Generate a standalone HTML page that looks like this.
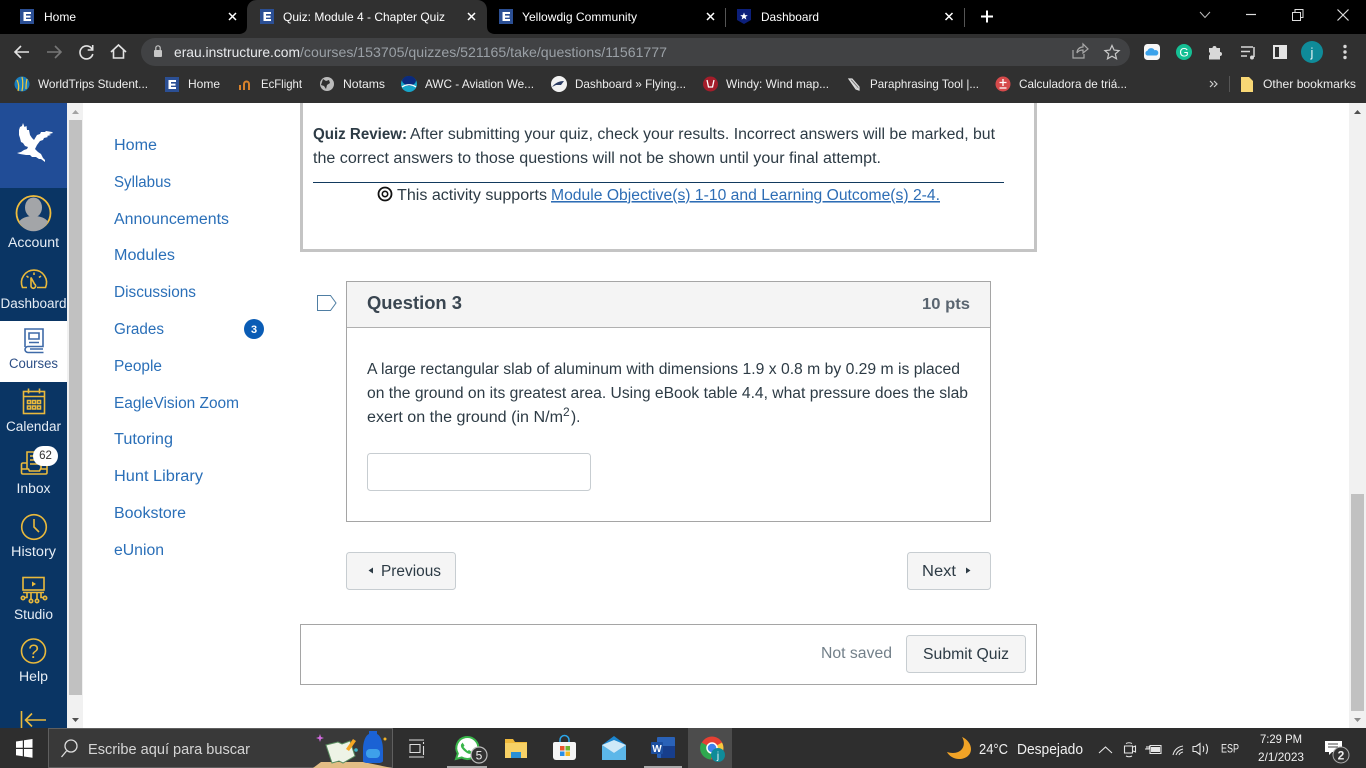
<!DOCTYPE html>
<html lang="en"><head><meta charset="utf-8"><title>Quiz: Module 4 - Chapter Quiz</title>
<style>
html,body{margin:0;padding:0;width:1366px;height:768px;overflow:hidden;background:#fff}
svg{display:block}
text{font-family:"Liberation Sans",sans-serif;white-space:pre}
.t{font-size:12px;fill:#fff}
.b{font-size:12px;fill:#eee}
.m{font-size:15.5px;fill:#2a6fb8}
.s{font-size:13.5px;fill:#e6edf5;text-anchor:middle}
.c{font-size:15.5px;fill:#2d3b45}
.i{fill:none;stroke:#e9b93c;stroke-width:1.6}
</style></head><body>
<svg width="1366" height="768" viewBox="0 0 1366 768" xmlns="http://www.w3.org/2000/svg">
<defs>
<g id="e"><rect width="14" height="15" fill="#2b4f94"/><path d="M3.500 3h7.500v2h-5v1.600h4.500v2H6v1.400h5v2H3.500z" fill="#fff"/></g>
</defs>
<!-- chrome -->
<rect width="1366" height="34" fill="#000"/>
<rect y="34" width="1366" height="69" fill="#303030"/>
<path d="M240 34c5-1 7-3 7-8V10c0-6 4-10 10-10h220c6 0 10 4 10 10v16c0 5 2 7 7 8z" fill="#303030"/>
<!-- tabs -->
<use href="#e" x="20" y="9"/><use href="#e" x="260" y="9"/><use href="#e" x="499" y="9"/>
<path d="M737 9h14v11l-7 4-7-4z" fill="#0c1f7a"/>
<path d="M744 12.500l1 2.600 2.800.1-2.200 1.700.8 2.700-2.400-1.600-2.400 1.600.8-2.700-2.200-1.700 2.800-.1z" fill="#fff"/>
<text class="t" x="44" y="21" textLength="32" lengthAdjust="spacingAndGlyphs">Home</text>
<text class="t" x="283" y="21" textLength="162" lengthAdjust="spacingAndGlyphs">Quiz: Module 4 - Chapter Quiz</text>
<text class="t" x="522" y="21" textLength="115" lengthAdjust="spacingAndGlyphs">Yellowdig Community</text>
<text class="t" x="761" y="21" textLength="58" lengthAdjust="spacingAndGlyphs">Dashboard</text>
<g stroke="#fff" stroke-width="1.500" fill="none">
<path d="M229 13l7 7M236 13l-7 7"/><path d="M468 13l7 7M475 13l-7 7"/>
<path d="M707 13l7 7M714 13l-7 7"/><path d="M945.500 13l7 7M952.500 13l-7 7"/>
</g>
<path d="M725.500 8v19M964.500 8v19" stroke="#555" fill="none"/>
<path d="M981 16.500h12M987 10.500v12" stroke="#fff" stroke-width="2" fill="none"/>
<path d="M1200 12l5 5.500 5-5.500" stroke="#bbb" fill="none"/>
<path d="M1246 14.500h10" stroke="#ddd" stroke-width="1.200"/>
<path d="M1292.500 12.500h8v8h-8zM1295 12.500v-3h8v8h-2.500" stroke="#ddd" fill="none"/>
<path d="M1337.500 9.500l11 11M1348.500 9.500l-11 11" stroke="#ddd" stroke-width="1.200"/>
<!-- toolbar -->
<g fill="none" stroke="#e2e2e2" stroke-width="1.600">
<path d="M29 52H15.500M21 46l-6 6 6 6"/>
<path d="M47 52h13.500M55 46l6 6-6 6" stroke="#777"/>
<path d="M92 49a6.500 6.500 0 1 0 .8 5M92.700 45v5h-5"/>
<path d="M111 52l7.500-7 7.500 7M113.500 50v8h10v-8"/>
</g>
<rect x="141" y="38" width="989" height="28" rx="14" fill="#414244"/>
<rect x="154" y="50" width="8" height="7" rx="1" fill="#c7c7c7"/><path d="M155.800 50v-2a2.200 2.200 0 0 1 4.400 0v2" stroke="#c7c7c7" fill="none" stroke-width="1.200"/>
<text x="174" y="57" font-size="14" fill="#e8eaed" textLength="126" lengthAdjust="spacingAndGlyphs">erau.instructure.com</text>
<text x="300" y="57" font-size="14" fill="#9aa0a6" textLength="367" lengthAdjust="spacingAndGlyphs">/courses/153705/quizzes/521165/take/questions/11561777</text>
<g fill="none" stroke="#a8a8a8" stroke-width="1.200">
<path d="M1073 50v8h11v-4M1077 53c0-4 3-6 6-6v-3l5 5-5 4v-3c-3 0-5 1-6 3z"/>
<path d="M1112 45.500l2.100 4.600 5 .5-3.800 3.300 1.200 4.900-4.500-2.600-4.500 2.600 1.200-4.900-3.800-3.300 5-.5z" stroke="#c8c8c8"/>
</g>
<rect x="1144" y="44" width="16" height="16" rx="3.500" fill="#f6f6f6"/><path d="M1147 55.500a2.500 2.500 0 0 1 .5-4.800 3.800 3.800 0 0 1 7-.5 2.800 2.800 0 0 1 2 5.300z" fill="#3ba2ea"/>
<circle cx="1184" cy="52" r="8" fill="#15bf94"/><text x="1184" y="56.500" font-size="12" fill="#fff" text-anchor="middle">G</text>
<path d="M1209 48h3.500a2 2 0 0 1 4 0h3.500v4a2 2 0 0 1 0 4v3.500h-11V55.500a2 2 0 0 0 0-3.500z" fill="#d8d8d8"/>
<path d="M1241 47h12M1241 51.500h9M1241 56h6" stroke="#d8d8d8" stroke-width="1.400" fill="none"/><path d="M1254 47v10" stroke="#d8d8d8" stroke-width="1.500"/><circle cx="1252" cy="57.500" r="2" fill="#d8d8d8"/>
<rect x="1274" y="46" width="12" height="12" fill="#303030" stroke="#e5e5e5" stroke-width="2"/><rect x="1279" y="46" width="7" height="12" fill="#e5e5e5"/>
<circle cx="1312" cy="52" r="11" fill="#0f8b99"/><text x="1312" y="57" font-size="13" fill="#e9f5f6" text-anchor="middle">j</text>
<g fill="#d8d8d8"><circle cx="1345" cy="46.500" r="1.700"/><circle cx="1345" cy="52" r="1.700"/><circle cx="1345" cy="57.500" r="1.700"/></g>
<!-- bookmarks -->
<circle cx="22" cy="84" r="7.500" fill="#1a7dbd"/><path d="M17 80c2 4 2 8 1 11M22 77c1 4 1 9 0 14M27 79c-1 4-1 7-1 10" stroke="#f1c83b" stroke-width="1.200" fill="none"/>
<use href="#e" x="165" y="77"/>
<path d="M240 90v-5M244 90v-6a2.500 2.500 0 0 1 5 0v6" stroke="#d9822b" stroke-width="2" fill="none"/>
<circle cx="327" cy="84" r="7" fill="#bbb"/><path d="M323 79l3 2 3-1 1 3-3 2-1 4-2-3-3-1z" fill="#303030"/>
<circle cx="409" cy="84" r="8" fill="#17a5c9"/><path d="M402 80a8 8 0 0 1 14 0c0 3-2 5-7 6-4-1-7-3-7-6z" fill="#0b2a7d"/><path d="M402 87c4-3 10-3 14 0" stroke="#fff" stroke-width="1.300" fill="none"/>
<circle cx="559" cy="84" r="8" fill="#f2f2f2"/><path d="M552 87c3-4 7-6 12-6l-3 4-5 0z" fill="#2b3c63"/>
<circle cx="710.500" cy="84" r="7.500" fill="#a31d2a"/><path d="M707 80l1.500 7h4l1.500-7" stroke="#fff" fill="none" stroke-width="1.300"/>
<path d="M849 79l9 10M849 79l3 0 7 8 0 3-3-1z" stroke="#ddd" stroke-width="1.200" fill="#777"/>
<circle cx="1003" cy="84" r="7.500" fill="#d64a4b"/><path d="M999.500 82.500h7M1003 79v7M999.500 88h7" stroke="#fff" stroke-width="1.300"/>
<path d="M1210 81l3 3-3 3M1214 81l3 3-3 3" stroke="#ccc" stroke-width="1.200" fill="none"/>
<path d="M1229.500 76v16" stroke="#555"/>
<path d="M1241 77h8l4 4v11h-12z" fill="#f8d775"/>
<text class="b" x="38" y="88" textLength="110" lengthAdjust="spacingAndGlyphs">WorldTrips Student...</text>
<text class="b" x="188" y="88" textLength="32" lengthAdjust="spacingAndGlyphs">Home</text>
<text class="b" x="261" y="88" textLength="41" lengthAdjust="spacingAndGlyphs">EcFlight</text>
<text class="b" x="343" y="88" textLength="42" lengthAdjust="spacingAndGlyphs">Notams</text>
<text class="b" x="425" y="88" textLength="109" lengthAdjust="spacingAndGlyphs">AWC - Aviation We...</text>
<text class="b" x="575" y="88" textLength="111" lengthAdjust="spacingAndGlyphs">Dashboard » Flying...</text>
<text class="b" x="726" y="88" textLength="103" lengthAdjust="spacingAndGlyphs">Windy: Wind map...</text>
<text class="b" x="870" y="88" textLength="109" lengthAdjust="spacingAndGlyphs">Paraphrasing Tool |...</text>
<text class="b" x="1019" y="88" textLength="108" lengthAdjust="spacingAndGlyphs">Calculadora de triá...</text>
<text class="b" x="1263" y="88" textLength="93" lengthAdjust="spacingAndGlyphs">Other bookmarks</text>
<!-- global nav -->
<rect y="103" width="67" height="625" fill="#0a3564"/>
<rect y="103" width="67" height="85" fill="#214d97"/>
<rect y="321" width="67" height="61" fill="#fff"/>
<path d="M23 123l1.500 4 2-1 .5 4 2 0 1 5 2 3 2 2 3-5 3-1 1-2 4 0 1-1 6 1 1 1-4 1 2 1-4 1 1 1-4 1-1 2-3 1-3 4-2 4 3 3 3 2 2 4 2 2 0 2-4-3-2 0-3-2-4 0-2-2-4 0-6-1-3-1 4-1 3-2 3-1 1-2-3-1-2-3-2-1-1-4-1-3 0-5 1-3 2-1z" fill="#fff"/>
<circle cx="33.500" cy="213" r="17" fill="#0d3868" stroke="#f0bd3c" stroke-width="1.800"/>
<path d="M19 222c2-4 8-6 14.500-6s12.500 2 14.500 6a16 16 0 0 1-29 0z" fill="#a3a5a8"/><ellipse cx="33.500" cy="207.500" rx="8.500" ry="10" fill="#a3a5a8"/>
<g class="i">
<path d="M27 287.500h-4.500a12.500 12.500 0 1 1 23 0H41M37 287.500h4"/><path d="M31 277.500l3.500 6.500a2.300 2.300 0 1 1-3.500 2zM34 272.500v2.500M26.500 276l2 1.500M41 276l-2 1.500"/>
</g>
<path d="M25 347V329h18v17.500H28a3 3 0 0 0 0 6h15.500M29 333h10v6H29zM29 342.500h10M43 349h-13" fill="none" stroke="#3f6aa8" stroke-width="1.600"/>
<g class="i">
<rect x="23.500" y="391.500" width="21" height="22"/><path d="M23.500 396.500h21M28.500 388.500v5M39.500 388.500v5"/>
<path d="M27.500 400.500h3v3h-3zM32.500 400.500h3v3h-3zM37.500 400.500h3v3h-3zM27.500 406h3v3h-3zM32.500 406h3v3h-3zM37.500 406h3v3h-3z"/>
<path d="M27 469v-17h14v17M30 456h8M30 460h8M30 464h8M27 463h-4c-1 0-1.500.5-1.500 1.500v8c0 1 .5 1.500 1.500 1.500h22.500c1 0 1.500-.5 1.500-1.500v-8c0-1-.5-1.500-1.500-1.500H41M21.500 469h7l1 2h10l1-2h6.500"/>
<circle cx="34" cy="527" r="12.300"/><path d="M34 519v8l5 5"/>
<rect x="23" y="577.500" width="21" height="12.500"/><path d="M23 592.500h21M27 592.500v5h-3M31 592.500v7M37 592.500v7M41 592.500v5h3"/><circle cx="23" cy="598" r="1.700"/><circle cx="31" cy="601" r="1.700"/><circle cx="37" cy="601" r="1.700"/><circle cx="45" cy="598" r="1.700"/>
<circle cx="33.500" cy="651" r="12"/>
<path d="M21.500 711v17M46 720H26M32 713.500l-6.500 6.500 6.500 6.500"/>
</g>
<path d="M32 581.500l4 2.500-4 2.500z" fill="#e9b93c"/>
<text x="33.500" y="658" font-size="19" fill="#e9b93c" text-anchor="middle">?</text>
<rect x="33" y="446" width="25" height="20" rx="10" fill="#fff"/>
<text x="45.500" y="459" font-size="11.500" fill="#333" text-anchor="middle">62</text>
<text class="s" x="33.500" y="247" textLength="51" lengthAdjust="spacingAndGlyphs">Account</text>
<text class="s" x="33.500" y="308" textLength="66" lengthAdjust="spacingAndGlyphs">Dashboard</text>
<text class="s" x="33.500" y="368" style="fill:#2d4f86" textLength="49" lengthAdjust="spacingAndGlyphs">Courses</text>
<text class="s" x="33.500" y="431" textLength="55" lengthAdjust="spacingAndGlyphs">Calendar</text>
<text class="s" x="33.500" y="493" textLength="34" lengthAdjust="spacingAndGlyphs">Inbox</text>
<text class="s" x="33.500" y="556" textLength="45" lengthAdjust="spacingAndGlyphs">History</text>
<text class="s" x="33.500" y="619" textLength="39" lengthAdjust="spacingAndGlyphs">Studio</text>
<text class="s" x="33.500" y="681" textLength="29" lengthAdjust="spacingAndGlyphs">Help</text>
<!-- left scrollbar -->
<rect x="67" y="103" width="16" height="625" fill="#f1f1f1"/>
<rect x="69" y="120" width="13" height="575" fill="#c1c1c1"/>
<path d="M75.500 110l-3.500 4h7z" fill="#a3a3a3"/><path d="M75.500 722l-3.500-4h7z" fill="#505050"/>
<!-- course nav -->
<text class="m" x="114" y="150" textLength="43" lengthAdjust="spacingAndGlyphs">Home</text>
<text class="m" x="114" y="187" textLength="57" lengthAdjust="spacingAndGlyphs">Syllabus</text>
<text class="m" x="114" y="224" textLength="115" lengthAdjust="spacingAndGlyphs">Announcements</text>
<text class="m" x="114" y="260" textLength="61" lengthAdjust="spacingAndGlyphs">Modules</text>
<text class="m" x="114" y="297" textLength="82" lengthAdjust="spacingAndGlyphs">Discussions</text>
<text class="m" x="114" y="334" textLength="50" lengthAdjust="spacingAndGlyphs">Grades</text>
<text class="m" x="114" y="371" textLength="48" lengthAdjust="spacingAndGlyphs">People</text>
<text class="m" x="114" y="408" textLength="125" lengthAdjust="spacingAndGlyphs">EagleVision Zoom</text>
<text class="m" x="114" y="444" textLength="59" lengthAdjust="spacingAndGlyphs">Tutoring</text>
<text class="m" x="114" y="481" textLength="89" lengthAdjust="spacingAndGlyphs">Hunt Library</text>
<text class="m" x="114" y="518" textLength="72" lengthAdjust="spacingAndGlyphs">Bookstore</text>
<text class="m" x="114" y="555" textLength="50" lengthAdjust="spacingAndGlyphs">eUnion</text>
<circle cx="254" cy="329" r="10" fill="#0a5cb5"/>
<text x="254" y="333" font-size="11" font-weight="bold" fill="#fff" text-anchor="middle">3</text>
<!-- quiz review box -->
<path d="M301.500 103v147.500h734V103" fill="none" stroke="#c4c4c4" stroke-width="3"/>
<text class="c" x="313" y="139" font-weight="bold" textLength="94" lengthAdjust="spacingAndGlyphs">Quiz Review:</text>
<text class="c" x="410" y="139" textLength="585" lengthAdjust="spacingAndGlyphs">After submitting your quiz, check your results. Incorrect answers will be marked, but</text>
<text class="c" x="313" y="163" textLength="568" lengthAdjust="spacingAndGlyphs">the correct answers to those questions will not be shown until your final attempt.</text>
<path d="M313 182.500h691" stroke="#123a5e"/>
<circle cx="385" cy="194" r="6.500" fill="none" stroke="#111" stroke-width="1.800"/><circle cx="385" cy="194" r="2.700" fill="none" stroke="#111" stroke-width="1.600"/>
<text class="c" x="397" y="200" textLength="150" lengthAdjust="spacingAndGlyphs">This activity supports</text>
<text class="c" x="551" y="200" style="fill:#2d6db5;text-decoration:underline" textLength="389" lengthAdjust="spacingAndGlyphs">Module Objective(s) 1-10 and Learning Outcome(s) 2-4.</text>
<!-- question -->
<path d="M317.500 295.500h13l5.500 7.500-5.500 7.500h-13z" fill="none" stroke="#4f7ea3" stroke-width="1"/>
<rect x="346.500" y="281.500" width="644" height="240" fill="#fff" stroke="#a5a5a5"/>
<rect x="347" y="282" width="643" height="45" fill="#f4f4f4"/>
<path d="M347 327.500h643" stroke="#b0b0b0"/>
<text x="367" y="309" font-size="18.500" font-weight="bold" fill="#3a4651" textLength="95" lengthAdjust="spacingAndGlyphs">Question 3</text>
<text x="922" y="309" font-size="16" font-weight="bold" fill="#5a6570" textLength="48" lengthAdjust="spacingAndGlyphs">10 pts</text>
<text class="c" x="367" y="374" textLength="593" lengthAdjust="spacingAndGlyphs">A large rectangular slab of aluminum with dimensions 1.9 x 0.8 m by 0.29 m is placed</text>
<text class="c" x="367" y="398" textLength="601" lengthAdjust="spacingAndGlyphs">on the ground on its greatest area. Using eBook table 4.4, what pressure does the slab</text>
<text class="c" x="367" y="422" textLength="196" lengthAdjust="spacingAndGlyphs">exert on the ground (in N/m</text>
<text x="563" y="416" font-size="12" fill="#2d3b45">2</text>
<text class="c" x="571" y="422">).</text>
<rect x="367.500" y="453.500" width="223" height="37" rx="3" fill="#fff" stroke="#c7cdd1"/>
<!-- nav buttons -->
<rect x="346.500" y="552.500" width="109" height="37" rx="3" fill="#f5f5f5" stroke="#c7cdd1"/>
<path d="M373 567.500v6l-4.500-3z" fill="#2d3b45"/>
<text class="c" x="381" y="576" textLength="60" lengthAdjust="spacingAndGlyphs">Previous</text>
<rect x="907.500" y="552.500" width="83" height="37" rx="3" fill="#f5f5f5" stroke="#c7cdd1"/>
<text class="c" x="922" y="576" textLength="34" lengthAdjust="spacingAndGlyphs">Next</text>
<path d="M966 567.500v6l4.500-3z" fill="#2d3b45"/>
<!-- submit -->
<rect x="300.500" y="624.500" width="736" height="60" fill="#fff" stroke="#a5a5a5"/>
<text x="821" y="658" font-size="15.500" fill="#73808a" textLength="71" lengthAdjust="spacingAndGlyphs">Not saved</text>
<rect x="906.500" y="635.500" width="119" height="37" rx="3" fill="#f5f5f5" stroke="#c7cdd1"/>
<text class="c" x="923" y="659" textLength="86" lengthAdjust="spacingAndGlyphs">Submit Quiz</text>
<!-- right scrollbar -->
<rect x="1349" y="103" width="17" height="625" fill="#f1f1f1"/>
<rect x="1351" y="494" width="13" height="217" fill="#c1c1c1"/>
<path d="M1357.500 110l-3.500 4h7z" fill="#505050"/><path d="M1357.500 722l-3.500-4h7z" fill="#8a8a8a"/>
<!-- taskbar -->
<rect y="728" width="1366" height="40" fill="#2e2e2e"/>
<rect x="48.500" y="728.500" width="344" height="39" fill="#393939" stroke="#5f5f5f"/>
<path d="M16 741.500l6.800-1v7.200H16zM24 740.300l8.500-1.300v8.700H24zM16 749h6.800v7.300l-6.800-1zM24 749h8.500v8.700L24 756.500z" fill="#fff"/>
<circle cx="71" cy="746" r="6" fill="none" stroke="#ddd" stroke-width="1.300"/><path d="M66.500 751l-5 6" stroke="#ddd" stroke-width="1.300"/>
<text x="88" y="754" font-size="14.500" fill="#d5d5d5" textLength="162" lengthAdjust="spacingAndGlyphs">Escribe aquí para buscar</text>
<path d="M313 768l8-6h42l29 6z" fill="#e3bd85"/>
<path d="M326 745l12-3 4 2 8-3 5 15-12 7-4-2-7 2z" fill="#eef3e6" stroke="#5b8f61"/>
<path d="M346 749l7-10 3 2-7 10z" fill="#f5a623"/>
<path d="M320 734l1 3 3 1-3 1-1 3-1-3-3-1 3-1z" fill="#d36be0"/>
<circle cx="356" cy="750" r="1.800" fill="#3fb6c9"/>
<path d="M363 750c0-9 3-15 6-16v-3h8v3c3 1 6 7 6 16v11c0 1-2 2-4 2h-12c-2 0-4-1-4-2z" fill="#1b62d4"/><rect x="366" y="749" width="14" height="9" rx="4" fill="#3ea0ea"/>
<circle cx="385" cy="739" r="1.500" fill="#f2b327"/>
<path d="M409 740h15M409 757h15M410 744.500h10v8h-10zM423.500 742v2M423.500 746v9" stroke="#ddd" stroke-width="1.100" fill="none"/>
<path d="M456 759l1.800-5.500a11 11 0 1 1 4 4z" fill="#fff" stroke="#39b54a" stroke-width="2"/>
<path d="M462 743.500c-1.500 1-1.500 3 0 5s4 4 6 5 3.500 0 4-1.500l-3-2-1.500 1-4-4 1-1.500-2-3z" fill="#39b54a"/>
<circle cx="479" cy="755" r="8" fill="#333" stroke="#bbb" stroke-width="1.200"/><text x="479" y="759.500" font-size="12" fill="#eee" text-anchor="middle">5</text>
<path d="M505 739h8l2 3h12v15h-22z" fill="#f0b93a"/><rect x="505" y="743" width="22" height="15" fill="#f7d166"/><path d="M511 758v-6h10v6" fill="#2a8fd4"/>
<path d="M555 742h19a2 2 0 0 1 2 2v13a3 3 0 0 1-3 3h-17a3 3 0 0 1-3-3v-13a2 2 0 0 1 2-2z" fill="#f5f5f5"/><path d="M560 742v-2a4 4 0 0 1 9 0v2" stroke="#2aa5e8" stroke-width="1.500" fill="none"/>
<rect x="560" y="746" width="4.500" height="4.500" fill="#e8552d"/><rect x="565.500" y="746" width="4.500" height="4.500" fill="#6eb52f"/><rect x="560" y="751.500" width="4.500" height="4.500" fill="#2a8fe8"/><rect x="565.500" y="751.500" width="4.500" height="4.500" fill="#f5b922"/>
<path d="M602 745l12-9 12 9v15h-24z" fill="#1c86cf"/><path d="M602 745l12 8 12-8v15h-24z" fill="#5cb7e9"/><path d="M602 745l12-5 12 5-12 8z" fill="#cfe9f8"/>
<rect x="657" y="737" width="18" height="21" rx="1" fill="#2a62b8"/><rect x="661" y="746" width="14" height="12" fill="#173e8c"/><rect x="651" y="742" width="12" height="12" rx="1" fill="#1d4f9f"/><text x="657" y="752" font-size="10" font-weight="bold" fill="#fff" text-anchor="middle">W</text>
<rect x="688" y="728" width="44" height="40" fill="#4c4c4c"/>
<rect x="447" y="766" width="40" height="2" fill="#aaa"/><rect x="644" y="766" width="38" height="2" fill="#aaa"/>
<circle cx="712" cy="748" r="11.500" fill="#e54033"/><path d="M712 748l10-5.500a11.500 11.500 0 0 1-8.500 17z" fill="#f7c93e"/><path d="M712 748l-1 11.500a11.500 11.500 0 0 1-9.500-17z" fill="#2fa84f"/><circle cx="712" cy="748" r="5" fill="#3f82ed" stroke="#fff" stroke-width="1.500"/>
<circle cx="718" cy="755" r="7" fill="#0f8b99"/><text x="718" y="759" font-size="10" fill="#fff" text-anchor="middle">j</text>
<path d="M962 737c5 2 9 7 9 12 0 6-5 10-12 10-5 0-10-3-12-7 6 2 12 1 15-3 3-4 2-9 0-12z" fill="#f1a326"/>
<text x="979" y="754" font-size="14.500" fill="#f0f0f0" textLength="29" lengthAdjust="spacingAndGlyphs">24°C</text>
<text x="1017" y="754" font-size="14.500" fill="#f0f0f0" textLength="66" lengthAdjust="spacingAndGlyphs">Despejado</text>
<g fill="none" stroke="#e5e5e5" stroke-width="1.100">
<path d="M1099 753l6.500-6 6.500 6"/>
<path d="M1124.500 746h8v7h-8zM1133 747l2.500-1v6l-2.500-1M1126 743.500c2-1 4-1 6 0M1126 756c2 1 4 1 6 0"/>
<path d="M1150 745.500h11v8h-11zM1145 749h5M1147 746v3M1149 746v3"/>
<path d="M1173 755c1-4 4-8 10-9M1176 755c1-3 3-5 7-6M1179 755c.5-1.500 1.500-2.500 4-3"/>
<path d="M1193 746.500v5h3l4 3v-11l-4 3zM1203 746c1 2 1 4 0 6M1206 744c2 3 2 7 0 10"/>
</g>
<rect x="1151" y="747" width="9" height="5" fill="#e5e5e5"/>
<text x="1221" y="752.500" font-size="12" fill="#f0f0f0" textLength="18" lengthAdjust="spacingAndGlyphs">ESP</text>
<text x="1260" y="743" font-size="12" fill="#f0f0f0" textLength="42" lengthAdjust="spacingAndGlyphs">7:29 PM</text>
<text x="1258" y="761" font-size="12" fill="#f0f0f0" textLength="46" lengthAdjust="spacingAndGlyphs">2/1/2023</text>
<path d="M1325 741h17v11h-10l-3 3v-3h-4z" fill="#fff"/><path d="M1328 744h10M1328 747h10" stroke="#444"/>
<circle cx="1341" cy="755" r="8" fill="#333" stroke="#aaa"/><text x="1341" y="759.500" font-size="12" font-weight="bold" fill="#eee" text-anchor="middle">2</text>
</svg>
</body></html>
